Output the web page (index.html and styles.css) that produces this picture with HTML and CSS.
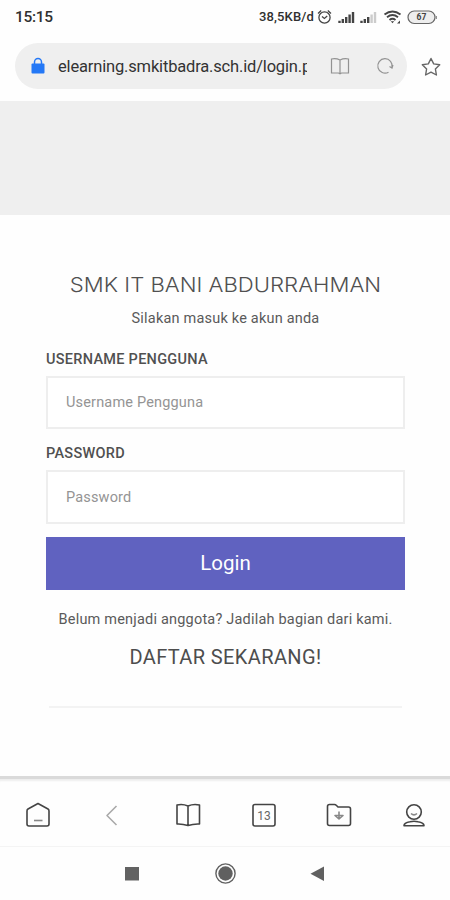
FILE: index.html
```html
<!DOCTYPE html>
<html lang="id">
<head>
<meta charset="utf-8">
<meta name="viewport" content="width=device-width, initial-scale=1">
<title>SMK IT Bani Abdurrahman</title>
<link rel="stylesheet" href="styles.css">
</head>
<body>
<header class="status">
  <span class="time">15:15</span>
  <span class="speed">38,5KB/d</span>
  <svg class="status-icons" width="122" height="20" viewBox="316 6 122 20" fill="none" stroke="#444">
    <circle cx="324.5" cy="16.500" r="5.6" stroke-width="1.3"/>
    <path d="M318 12.500l3.2-3M331 12.500l-3.2-3M322 15.500l2.4 2 2.8-2.4" stroke-width="1.3"/>
    <g stroke-width="2.4"><path d="M339.5 22v-2.2M342.8 22v-4M346.2 22v-6M349.6 22v-8.500M353 22V11"/><path d="M361.5 22v-2.200M364.800 22v-4M368.200 22v-6"/><path stroke="#ccc" d="M371.600 22v-8.500M375 22V11"/></g>
    <path d="M384.500 13.500q8-6 16 0M387 16.200q5.500-4.200 11 0M389.500 18.900q3-2.300 6 0" stroke-width="1.900"/>
    <path d="M390.800 20.200h3.400l-1.700 2zM397 22.500l3-3v3z" fill="#444" stroke="none"/>
    <rect x="408" y="10" width="27" height="12.500" rx="6.200" fill="#eee" stroke="#666" stroke-width="1.200"/>
    <path d="M436.300 15v3" stroke="#777"/>
    <text class="battery" x="421.500" y="19.300" text-anchor="middle">67</text>
  </svg>
</header>
<div class="address">
  <div class="pill">
    <svg width="14" height="18" viewBox="0 0 14 18"><path d="M3.500 8V5a3.500 3.500 0 0 1 7 0v3" fill="none" stroke="#2478f6" stroke-width="1.500"/><rect x=".5" y="6.500" width="13" height="10" rx="1" fill="#2478f6"/></svg>
    <span class="url">elearning.smkitbadra.sch.id/login.p</span>
    <svg class="reader" width="20" height="18" viewBox="0 0 20 18" fill="none" stroke="#929292" stroke-width="1.200"><path d="M10 3Q6 1 1.500 2v14H8.500l1.500.800 1.500-.800h7V2Q14 1 10 3zV16.500"/></svg>
    <svg class="reload" width="18" height="18" viewBox="0 0 18 18" fill="none" stroke="#929292" stroke-width="1.200"><path d="M12.500 15.200A7.200 7.200 0 1 1 16 10.500M13.500 9.500l2.500 1.500 1-3"/></svg>
  </div>
  <svg class="star" width="20" height="20" viewBox="0 0 20 20" fill="none" stroke="#666" stroke-width="1.400" stroke-linejoin="round"><path d="M10 1.500l2.700 5.400 6 .9-4.300 4.200 1 6-5.400-2.800L4.600 18l1-6-4.300-4.200 6-.9z"/></svg>
</div>
<div class="banner"></div>
<main class="page">
  <h1>SMK IT BANI ABDURRAHMAN</h1>
  <p class="intro">Silakan masuk ke akun anda</p>
  <form>
    <label for="user">USERNAME PENGGUNA</label>
    <input id="user" type="text" placeholder="Username Pengguna">
    <label for="pass">PASSWORD</label>
    <input id="pass" type="password" placeholder="Password">
    <button type="button">Login</button>
  </form>
  <p class="join">Belum menjadi anggota? Jadilah bagian dari kami.</p>
  <a class="signup">DAFTAR SEKARANG!</a>
  <hr>
</main>
<nav class="toolbar">
  <svg width="28" height="28" viewBox="0 0 28 28"><path d="M14 2.500L24 8q1 .6 1 2v13q0 2-2 2H5q-2 0-2-2V10q0-1.400 1-2z"/><path class="thin" d="M10 19.500h8.500"/></svg>
  <svg class="back" width="28" height="28" viewBox="0 0 28 28"><path d="M17.500 5L8 14.500l9.500 9.500"/></svg>
  <svg width="28" height="28" viewBox="0 0 28 28"><path d="M14 5Q8.500 2.500 3 4v19q5.500-.3 11 1.500Q19.500 22.700 25.500 23V4Q19.500 2.500 14 5zV24.500"/></svg>
  <svg width="28" height="28" viewBox="0 0 28 28"><rect x="3" y="3.500" width="22" height="21.500" rx="2"/><text class="tabs" x="14" y="18.500" text-anchor="middle">13</text></svg>
  <svg width="28" height="28" viewBox="0 0 28 28"><path d="M4.500 3.500h5q1 0 2 1l1.500 1.500h10.500q2 0 2 2v14.500q0 2-2 2h-19q-2 0-2-2v-17q0-2 2-2z"/><path class="thin" d="M14 10.500v7.500M10 14.500l4 3.500 4-3.500z"/></svg>
  <svg width="28" height="28" viewBox="0 0 28 28"><circle cx="14" cy="11" r="7.300"/><path d="M4 24.800q0-3 6-4 4-1 8 0 6 1 6 4z"/><path class="thin" d="M11 12.500q3 2.700 6 0"/></svg>
</nav>
<footer class="system">
  <svg width="24" height="24" viewBox="0 0 24 24"><rect x="5" y="5" width="14" height="13.500" fill="#626262"/></svg>
  <svg width="24" height="24" viewBox="0 0 24 24"><circle cx="12.500" cy="11.500" r="9.600" fill="none" stroke="#606060" stroke-width="1.400"/><circle cx="12.500" cy="11.500" r="7.200" fill="#606060"/></svg>
  <svg width="24" height="24" viewBox="0 0 24 24"><path d="M19 4.500V19L5.500 11.700z" fill="#606060"/></svg>
</footer>
</body>
</html>
```
FILE: styles.css
```css
* { box-sizing: border-box; }
body { margin: 0; height: 900px; display: flex; flex-direction: column; overflow: hidden; background: #fefefe; color: #5a5a5a; font-family: Roboto, "Liberation Sans", sans-serif; }
svg { display: block; flex: none; }
.status { height: 33px; display: flex; align-items: center; padding: 0 12px 0 15px; color: #303030; }
.time { font-size: 15.500px; font-weight: 500; letter-spacing: -.3px; }
.speed { margin-left: auto; font-size: 13px; font-weight: 500; letter-spacing: .15px; margin-right: 2px; }
.battery { font: 700 8.500px Roboto, sans-serif; fill: #444; stroke: none; }
.address { height: 68px; display: flex; align-items: center; padding: 0 9px 2px 15px; }
.pill { width: 392px; height: 46px; border-radius: 23px; background: #efefef; display: flex; align-items: center; padding: 0 13px 0 16px; }
.url { width: 249px; margin-left: 13px; padding-top: 1px; overflow: hidden; white-space: nowrap; font-size: 16.500px; line-height: 26px; letter-spacing: -.17px; color: #333; }
.reader { margin-left: 23px; }
.reload { margin-left: 26px; }
.star { margin: 2px 0 0 14px; }
.banner { height: 114px; background: #efefef; }
.page { height: 561px; padding: 57px 45px 0 46px; display: flex; flex-direction: column; }
h1 { margin: 0; text-align: center; white-space: nowrap; font: 300 20.500px/26px Inter, sans-serif; color: #505050; transform: scaleX(1.08); }
p { margin: 0; text-align: center; white-space: nowrap; font-size: 14.500px; line-height: 20px; letter-spacing: .2px; }
.intro { margin-top: 11px; }
form { display: flex; flex-direction: column; }
label { margin-top: 21px; font-size: 14.500px; font-weight: 500; line-height: 20px; letter-spacing: .28px; color: #505050; }
input { height: 53px; margin-top: 6px; padding: 0 18px; border: 2px solid #eee; background: #fff; font: 14.500px Roboto, sans-serif; letter-spacing: .17px; outline: 0; }
input + label { margin-top: 15px; }
label + input#pass { height: 54px; }
input::placeholder { color: #949494; opacity: 1; }
button { height: 53px; margin-top: 13px; padding-bottom: 3px; border: 0; background: #6062c0; color: #fff; font: 20.500px Roboto, sans-serif; }
.join { margin-top: 20px; }
.signup { margin-top: 14px; text-align: center; font-size: 20px; line-height: 26px; letter-spacing: .38px; color: #4d4d4d; }
hr { width: 353px; height: 2px; margin: 36px auto 0; border: 0; background: #f3f3f3; }
.toolbar { height: 71px; padding: 5px 22px 0 24px; border-top: 3px solid #dadada; border-bottom: 1px solid #f4f4f4; display: flex; align-items: center; justify-content: space-between; box-shadow: inset 0 3px 2px -1px #eee; }
.toolbar svg { fill: none; stroke: #444; stroke-width: 1.600; stroke-linejoin: round; }
.toolbar .back { stroke: #aaa; }
.toolbar .thin { stroke: #888; }
.toolbar .tabs { font: 12px Roboto, sans-serif; fill: #666; stroke: none; }
.system { height: 53px; padding: 0 121px 0 120px; display: flex; align-items: center; justify-content: space-between; }
```
